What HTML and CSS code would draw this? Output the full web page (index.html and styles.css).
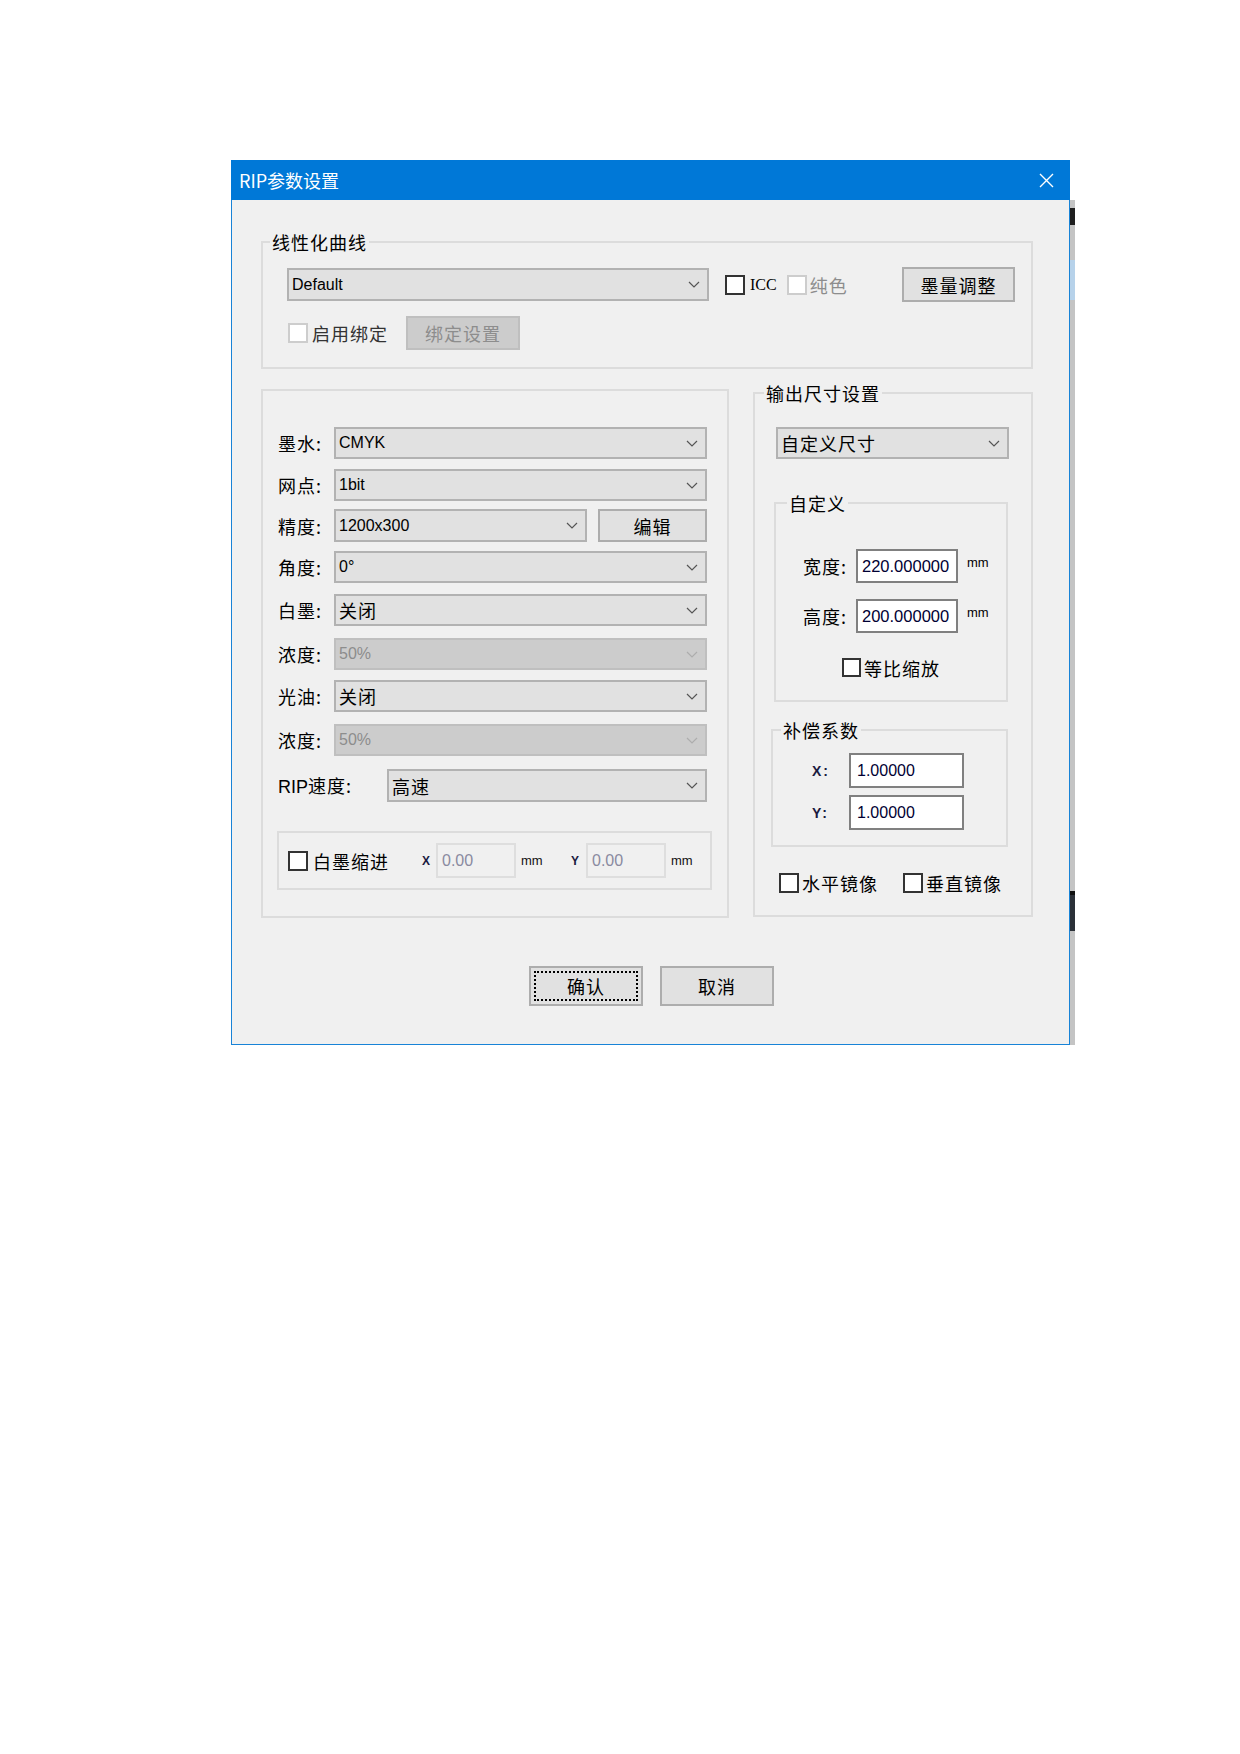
FILE: index.html
```html
<!DOCTYPE html>
<html lang="zh-CN">
<head>
    <meta charset="UTF-8">
    <meta name="viewport" content="width=device-width, initial-scale=1.0">
    <title>RIP参数设置</title>
    <link rel="stylesheet" href="styles.css">
</head>
<body>
    <div class="desk">
        <!-- window behind the dialog, only its edges show -->
        <div class="behind">
            <span class="edge-dark edge-top"></span>
            <span class="edge-blue"></span>
            <span class="edge-dark edge-low"></span>
            <span class="tick tick-a"></span>
            <span class="tab"></span>
            <span class="line line-a"></span>
            <span class="line line-b"></span>
            <span class="tick tick-b"></span>
        </div>

        <div class="dialog">
            <div class="titlebar">
                <span class="title">RIP参数设置</span>
                <svg class="close" width="15" height="15" viewBox="0 0 15 15">
                    <path d="M1 1L14 14M14 1L1 14"/>
                </svg>
            </div>

            <div class="body">
                <fieldset class="group curve">
                    <legend>线性化曲线</legend>
                    <div class="curve-row">
                        <div class="select curve-select">
                            <span>Default</span>
                            <svg class="chev" width="12" height="7" viewBox="0 0 12 7"><path d="M1 1l5 5 5-5"/></svg>
                        </div>
                        <label class="check icc"><span class="cb"></span><span class="serif">ICC</span></label>
                        <label class="check off solid"><span class="cb"></span>纯色</label>
                        <button class="btn ink-btn">墨量调整</button>
                    </div>
                    <div class="curve-row second">
                        <label class="check dim"><span class="cb off-cb"></span>启用绑定</label>
                        <button class="btn disabled bind-btn">绑定设置</button>
                    </div>
                </fieldset>

                <div class="columns">
                    <fieldset class="group params">
                        <div class="field-list">
                            <div class="field">
                                <span class="label">墨水:</span>
                                <div class="select"><span>CMYK</span><svg class="chev" width="12" height="7" viewBox="0 0 12 7"><path d="M1 1l5 5 5-5"/></svg></div>
                            </div>
                            <div class="field">
                                <span class="label">网点:</span>
                                <div class="select"><span>1bit</span><svg class="chev" width="12" height="7" viewBox="0 0 12 7"><path d="M1 1l5 5 5-5"/></svg></div>
                            </div>
                            <div class="field tall">
                                <span class="label">精度:</span>
                                <div class="select short"><span>1200x300</span><svg class="chev" width="12" height="7" viewBox="0 0 12 7"><path d="M1 1l5 5 5-5"/></svg></div>
                                <button class="btn edit-btn">编辑</button>
                            </div>
                            <div class="field">
                                <span class="label">角度:</span>
                                <div class="select"><span>0°</span><svg class="chev" width="12" height="7" viewBox="0 0 12 7"><path d="M1 1l5 5 5-5"/></svg></div>
                            </div>
                            <div class="field">
                                <span class="label">白墨:</span>
                                <div class="select"><span class="zh">关闭</span><svg class="chev" width="12" height="7" viewBox="0 0 12 7"><path d="M1 1l5 5 5-5"/></svg></div>
                            </div>
                            <div class="field">
                                <span class="label">浓度:</span>
                                <div class="select disabled"><span>50%</span><svg class="chev" width="12" height="7" viewBox="0 0 12 7"><path d="M1 1l5 5 5-5"/></svg></div>
                            </div>
                            <div class="field">
                                <span class="label">光油:</span>
                                <div class="select"><span class="zh">关闭</span><svg class="chev" width="12" height="7" viewBox="0 0 12 7"><path d="M1 1l5 5 5-5"/></svg></div>
                            </div>
                            <div class="field">
                                <span class="label">浓度:</span>
                                <div class="select disabled"><span>50%</span><svg class="chev" width="12" height="7" viewBox="0 0 12 7"><path d="M1 1l5 5 5-5"/></svg></div>
                            </div>
                            <div class="field tall">
                                <span class="label wide"><span class="latin">RIP</span>速度:</span>
                                <div class="select"><span class="zh">高速</span><svg class="chev" width="12" height="7" viewBox="0 0 12 7"><path d="M1 1l5 5 5-5"/></svg></div>
                            </div>
                        </div>

                        <div class="indent-box">
                            <label class="check"><span class="cb"></span>白墨缩进</label>
                            <span class="axis axis-x">X</span>
                            <div class="input disabled-input">0.00</div>
                            <span class="unit">mm</span>
                            <span class="axis axis-y">Y</span>
                            <div class="input disabled-input">0.00</div>
                            <span class="unit">mm</span>
                        </div>
                    </fieldset>

                    <fieldset class="group output">
                        <legend>输出尺寸设置</legend>
                        <div class="select"><span class="zh">自定义尺寸</span><svg class="chev" width="12" height="7" viewBox="0 0 12 7"><path d="M1 1l5 5 5-5"/></svg></div>

                        <fieldset class="group custom">
                            <legend>自定义</legend>
                            <div class="size-row">
                                <span class="size-label">宽度:</span>
                                <div class="input value">220.000000</div>
                                <span class="size-unit">mm</span>
                            </div>
                            <div class="size-row next">
                                <span class="size-label">高度:</span>
                                <div class="input value">200.000000</div>
                                <span class="size-unit">mm</span>
                            </div>
                            <div class="scale-row">
                                <label class="check"><span class="cb small"></span>等比缩放</label>
                            </div>
                        </fieldset>

                        <fieldset class="group coef">
                            <legend>补偿系数</legend>
                            <div class="coef-row">
                                <span class="coef-label">X:</span>
                                <div class="input coef-input">1.00000</div>
                            </div>
                            <div class="coef-row next">
                                <span class="coef-label">Y:</span>
                                <div class="input coef-input">1.00000</div>
                            </div>
                        </fieldset>

                        <div class="mirror-row">
                            <label class="check"><span class="cb"></span>水平镜像</label>
                            <label class="check vertical"><span class="cb"></span>垂直镜像</label>
                        </div>
                    </fieldset>
                </div>

                <div class="actions">
                    <button class="btn action primary">确认</button>
                    <button class="btn action">取消</button>
                </div>
            </div>
        </div>
    </div>
</body>
</html>
```

FILE: styles.css
```css
body {
    margin: 0;
    background-color: #ffffff;
    color: #000000;
    font-family: "Noto Sans CJK SC", "Liberation Sans", sans-serif;
    font-size: 18px;
    line-height: 20px;
    letter-spacing: 1px;
}

.desk {
    position: relative;
    z-index: 0;
    width: 839px;
    margin: 160px 0 0 231px;
}

/* the window behind */
.behind {
    position: absolute;
    z-index: -1;
    top: 40px;
    left: 0;
    right: -5px;
    bottom: -5px;
    background: linear-gradient(90deg, #a9a9a9 0, #c4c4c4 60px) #c4c4c4;
}

.behind span {
    position: absolute;
}

.edge-dark {
    right: 0;
    width: 5px;
    background-color: #1f1f1f;
}

.edge-top {
    top: 8px;
    height: 17px;
}

.edge-low {
    top: 691px;
    height: 36px;
    background-color: #2b3038;
    border-top: 4px solid #101010;
}

.edge-blue {
    right: 0;
    top: 60px;
    width: 5px;
    height: 40px;
    background-color: #b7d2ea;
}

.tick {
    bottom: 0;
    width: 2px;
    height: 5px;
    background-color: #0063b1;
}

.tick-a {
    left: 57px;
}

.tick-b {
    left: 782px;
}

.tab {
    bottom: 0;
    left: 290px;
    width: 109px;
    height: 5px;
    border: 2px solid #0063b1;
    border-top: none;
}

.line {
    bottom: 0;
    width: 1px;
    height: 5px;
    background-color: #8a8a8a;
}

.line-a {
    left: 417px;
}

.line-b {
    left: 530px;
}

/* dialog */
.dialog {
    box-sizing: border-box;
    background-color: #f0f0f0;
    border: 1px solid #1883d7;
    border-top: none;
}

.titlebar {
    height: 40px;
    margin: 0 -1px;
    padding: 0 16px 0 8px;
    background-color: #0078d7;
    color: #ffffff;
    display: flex;
    align-items: center;
    justify-content: space-between;
}

.title {
    font-size: 18px;
    letter-spacing: 0;
}

.close path {
    stroke: #ffffff;
    stroke-width: 1.4;
    fill: none;
}

.body {
    padding: 32px 36px 38px 29px;
}

.group {
    box-sizing: border-box;
    margin: 0;
    padding: 0;
    min-width: 0;
    border: 2px solid #dcdcdc;
}

legend {
    padding: 0 2px;
    font-size: 18px;
    line-height: 20px;
}

.latin {
    font-family: "Liberation Sans", sans-serif;
    letter-spacing: 0;
}

.serif {
    font-family: "Liberation Serif", serif;
    font-size: 16px;
    letter-spacing: 0;
}

/* controls */
.select {
    box-sizing: border-box;
    height: 32px;
    display: flex;
    align-items: center;
    justify-content: space-between;
    padding: 0 7px 0 3px;
    background-color: #e1e1e1;
    border: 2px solid #b2b2b2;
    font-family: "Liberation Sans", "Noto Sans CJK SC", sans-serif;
    font-size: 16px;
    letter-spacing: 0;
}

.select .zh {
    font-family: "Noto Sans CJK SC", sans-serif;
    font-size: 18px;
    letter-spacing: 1px;
}

.chev path {
    stroke: #555555;
    stroke-width: 1.2;
    fill: none;
}

.select.disabled {
    background-color: #cccccc;
    border-color: #bfbfbf;
    color: #8d8d8d;
}

.select.disabled .chev path {
    stroke: #adadad;
}

.btn {
    box-sizing: border-box;
    padding: 0;
    background-color: #e1e1e1;
    border: 2px solid #adadad;
    color: #000000;
    font-family: "Noto Sans CJK SC", sans-serif;
    font-size: 18px;
    letter-spacing: 1px;
}

.btn.disabled {
    background-color: #cccccc;
    border-color: #bfbfbf;
    color: #8d8d8d;
}

.check {
    display: inline-flex;
    align-items: center;
    flex-shrink: 0;
    gap: 4px;
    white-space: nowrap;
}

.cb {
    box-sizing: border-box;
    width: 20px;
    height: 20px;
    border: 2px solid #333333;
    background-color: #ffffff;
}

.cb.small {
    width: 19px;
    height: 19px;
}

.check.off {
    color: #8d8d8d;
}

.check.off .cb,
.cb.off-cb {
    border-color: #cdcdcd;
}

.check.dim {
    color: #333333;
}

.input {
    box-sizing: border-box;
    display: flex;
    align-items: center;
    flex-shrink: 0;
    font-family: "Liberation Sans", sans-serif;
    letter-spacing: 0;
}

/* 线性化曲线 */
.curve {
    padding: 15px 16px 17px 24px;
}

.curve legend {
    margin-left: -17px;
}

.curve-row {
    display: flex;
    align-items: center;
    height: 35px;
}

.curve-row.second {
    margin-top: 14px;
    height: 34px;
}

.curve-select {
    width: 422px;
    height: 33px;
}

.icc {
    margin-left: 16px;
    gap: 5px;
}

.solid {
    margin-left: 10px;
    gap: 3px;
}

.ink-btn {
    margin-left: auto;
    width: 113px;
    height: 35px;
}

.check.dim {
    margin-left: 1px;
}

.bind-btn {
    margin-left: 18px;
    width: 114px;
    height: 34px;
}

/* columns */
.columns {
    display: flex;
    align-items: flex-start;
    gap: 24px;
    margin-top: 14px;
}

.params {
    flex-shrink: 0;
    width: 468px;
    margin-top: 6px;
    padding: 36px 20px 26px 15px;
}

.field-list {
    display: flex;
    flex-direction: column;
}

.field {
    display: flex;
    align-items: center;
    height: 32px;
    margin-top: 10px;
}

/* the dialog rows are not evenly spaced */
.field:first-child {
    margin-top: 0;
}

.field:nth-child(3) {
    margin-top: 8px;
}

.field:nth-child(4) {
    margin-top: 9px;
}

.field:nth-child(5) {
    margin-top: 11px;
}

.field:nth-child(6),
.field:nth-child(8) {
    margin-top: 12px;
}

.field:nth-child(9) {
    margin-top: 13px;
}

.field.tall {
    height: 33px;
}

.field .select {
    flex: 1;
    height: 100%;
}

.label {
    width: 56px;
    flex-shrink: 0;
}

.label.wide {
    width: 109px;
}

.field .select.short {
    flex: none;
    width: 253px;
}

.edit-btn {
    margin-left: 11px;
    width: 109px;
    height: 33px;
}

.indent-box {
    box-sizing: border-box;
    display: flex;
    align-items: center;
    width: 435px;
    height: 59px;
    margin: 29px 0 0 -1px;
    padding-left: 9px;
    border: 2px solid #dcdcdc;
}

.indent-box .check {
    gap: 5px;
}

.axis {
    font-family: "Liberation Sans", sans-serif;
    font-size: 12px;
    font-weight: bold;
    letter-spacing: 0;
    color: #1a1a40;
}

.axis-x {
    margin-left: 33px;
    width: 14px;
}

.axis-y {
    margin-left: 5px;
    width: 15px;
}

.disabled-input {
    width: 80px;
    height: 35px;
    padding-left: 4px;
    background-color: #f0f0f0;
    border: 2px solid #dedede;
    color: #8a8aa0;
    font-size: 16px;
}

.unit {
    margin-left: 5px;
    width: 45px;
    font-family: "Liberation Sans", sans-serif;
    font-size: 13px;
    letter-spacing: 0;
    color: #111111;
}

.unit:last-child {
    width: auto;
}

/* 输出尺寸设置 */
.output {
    flex-shrink: 0;
    width: 280px;
    padding: 24px 22px 22px 21px;
}

.output legend {
    margin-left: -12px;
}

.custom {
    width: 234px;
    margin: 34px 0 0 -2px;
    padding: 36px 0 23px 0;
}

.custom legend {
    margin-left: 11px;
}

.size-row {
    display: flex;
    align-items: center;
    height: 34px;
    padding-left: 27px;
}

.size-row.next {
    margin-top: 16px;
}

.size-label {
    width: 53px;
}

.value {
    width: 102px;
    height: 34px;
    padding-left: 4px;
    background-color: #ffffff;
    border: 2px solid #808080;
    font-size: 16.5px;
    color: #000033;
}

.size-unit {
    align-self: flex-start;
    margin: 4px 0 0 9px;
    font-family: "Liberation Sans", sans-serif;
    font-size: 13px;
    letter-spacing: 0;
}

.scale-row {
    display: flex;
    justify-content: center;
    margin-top: 25px;
    height: 19px;
}

.scale-row .check {
    gap: 3px;
}

.coef {
    width: 237px;
    margin: 18px 0 0 -5px;
    padding: 13px 0 15px 0;
}

.coef legend {
    margin-left: 8px;
}

.coef-row {
    display: flex;
    align-items: center;
    height: 35px;
    padding-left: 39px;
}

.coef-row.next {
    margin-top: 7px;
}

.coef-label {
    width: 37px;
    font-family: "Liberation Sans", sans-serif;
    font-size: 14px;
    font-weight: bold;
    letter-spacing: 2px;
    color: #1a1a40;
}

.coef-input {
    width: 115px;
    height: 35px;
    padding-left: 6px;
    background-color: #ffffff;
    border: 2px solid #808080;
    font-size: 16px;
    color: #000033;
}

.mirror-row {
    display: flex;
    align-items: center;
    height: 20px;
    margin: 26px 0 0 3px;
}

.mirror-row .check {
    gap: 3px;
}

.mirror-row .vertical {
    margin-left: 25px;
}

/* buttons */
.actions {
    display: flex;
    justify-content: center;
    gap: 17px;
    margin-top: 48px;
    padding-left: 9px;
}

.action {
    width: 114px;
    height: 40px;
}

.primary {
    outline: 2px dotted #000000;
    outline-offset: -7px;
}
```
